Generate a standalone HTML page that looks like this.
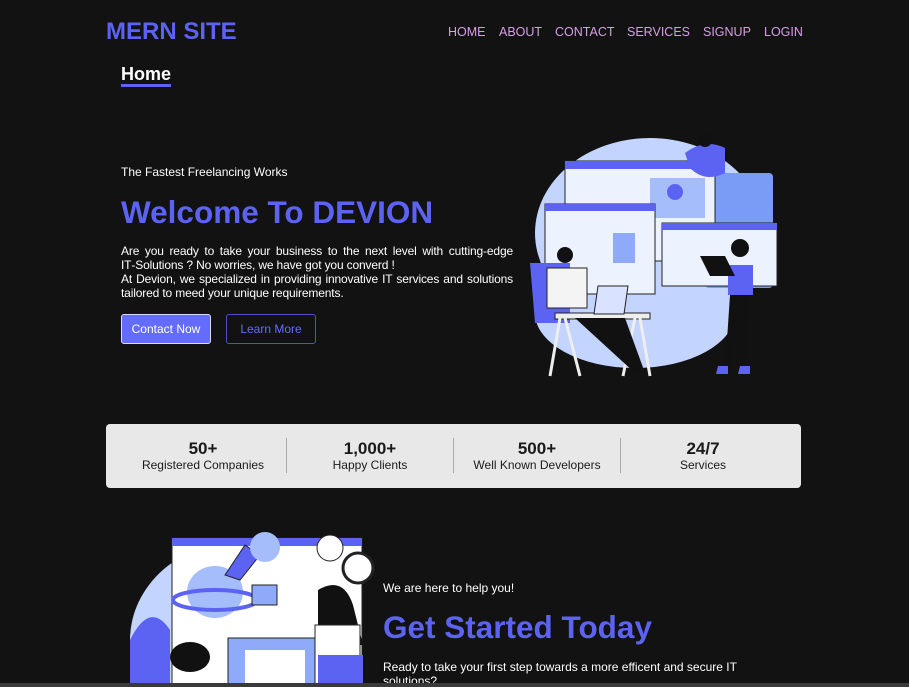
<!DOCTYPE html>
<html><head><style>
*{margin:0;padding:0;box-sizing:border-box}
html,body{width:909px;height:687px;overflow:hidden}
body{background:#121212;font-family:"Liberation Sans",sans-serif;color:#fff;position:relative}
.a{position:absolute}
.logo{left:106px;top:18px;font-size:24px;font-weight:bold;color:#5c63f2}
.nav{top:25px;font-size:12.5px;color:#d79ee8}
.home{left:121px;top:65px;font-size:18px;font-weight:bold;border-bottom:3px solid #5c63f2;line-height:19px}
.p{font-size:12px;line-height:14px}
h1{position:absolute;left:121px;top:194px;font-size:31.5px;color:#5c63f2;font-weight:bold}
.btn{top:314px;height:30px;width:90px;border-radius:3px;font-size:12px;text-align:center;line-height:28px}
.stats{left:106px;top:424px;width:695px;height:64px;background:#e8e8e8;border-radius:4px;color:#1a1a1a}
.st{position:absolute;top:15px;width:166px;text-align:center}
.st b{display:block;font-size:17px;line-height:20px}
.st span{display:block;font-size:12px;line-height:13px}
.div{position:absolute;top:14px;width:1px;height:35px;background:#aaa}
</style></head><body>
<div class="a logo">MERN SITE</div>
<div class="a nav" style="left:448px">HOME</div>
<div class="a nav" style="left:499px">ABOUT</div>
<div class="a nav" style="left:555px">CONTACT</div>
<div class="a nav" style="left:627px">SERVICES</div>
<div class="a nav" style="left:703px">SIGNUP</div>
<div class="a nav" style="left:764px">LOGIN</div>
<div class="a home">Home</div>
<div class="a p" style="left:121px;top:165px">The Fastest Freelancing Works</div>
<h1>Welcome To DEVION</h1>
<div class="a p" style="left:121px;top:244px;width:392px;text-align:justify;letter-spacing:-0.15px">Are you ready to take your business to the next level with cutting-edge IT&#8209;Solutions ? No worries, we have got you converd !<br>At Devion, we specialized in providing innovative IT services and solutions tailored to meed your unique requirements.</div>
<div class="a btn" style="left:121px;background:#646cff;border:1px solid #dcdcff">Contact Now</div>
<div class="a btn" style="left:226px;border:1px solid #4b52c8;color:#646cff">Learn More</div>

<svg class="a" style="left:525px;top:128px" width="260" height="252" viewBox="0 0 260 252">
<ellipse cx="125" cy="105" rx="115" ry="95" fill="#c3d4fe"/>
<ellipse cx="110" cy="185" rx="100" ry="55" fill="#c3d4fe"/>
<rect x="180" y="45" width="68" height="115" rx="4" fill="#7a9cf6"/>
<rect x="40" y="33" width="150" height="100" fill="#edf2ff" stroke="#222"/>
<rect x="40" y="33" width="150" height="8" fill="#5c63f2"/>
<rect x="125" y="50" width="55" height="40" fill="#a5bdfb"/>
<circle cx="150" cy="64" r="8" fill="#5c63f2"/>
<rect x="20" y="76" width="110" height="90" fill="#edf2ff" stroke="#222"/>
<rect x="20" y="76" width="110" height="7" fill="#5c63f2"/>
<rect x="88" y="105" width="22" height="30" fill="#8faaf8"/>
<rect x="137" y="95" width="115" height="63" fill="#edf2ff" stroke="#222"/>
<rect x="137" y="95" width="115" height="7" fill="#5c63f2"/>
<path d="M5 135 h40 v60 h-35z" fill="#5c63f2"/>
<rect x="30" y="185" width="95" height="6" fill="#eee" stroke="#222"/>
<path d="M35 190 l-10 58 M115 190 l10 58 M40 190 l15 58 M110 190 l-12 58" stroke="#eee" stroke-width="3"/>
<path d="M22 140 h40 v40 h-40z" fill="#f4f4f4" stroke="#222"/>
<circle cx="40" cy="127" r="8" fill="#111"/>
<path d="M50 190 l50 0 l20 55 h-10z" fill="#111"/>
<path d="M73 158 h30 l-4 28 h-30z" fill="#d9e3ff" stroke="#222"/>
<path d="M203 137 h25 v30 h-25z" fill="#5c63f2"/>
<path d="M205 167 h20 l-5 75 h-8 l-3 -40 l-3 40 h-6z" fill="#111"/>
<circle cx="215" cy="120" r="9" fill="#111"/>
<path d="M175 128 h25 l10 20 h-25z" fill="#111"/>
<path d="M160 25 q20 -15 40 -5 l0 25 q-20 10 -35 -5z" fill="#5c63f2"/>
<circle cx="180" cy="12" r="7" fill="#111"/>
<path d="M193 238 h10 v8 h-12z M215 238 h10 v8 h-12z" fill="#5c63f2"/>
</svg>

<div class="a stats">
<div class="st" style="left:14px"><b>50+</b><span>Registered Companies</span></div>
<div class="div" style="left:180px"></div>
<div class="st" style="left:181px"><b>1,000+</b><span>Happy Clients</span></div>
<div class="div" style="left:347px"></div>
<div class="st" style="left:348px"><b>500+</b><span>Well Known Developers</span></div>
<div class="div" style="left:514px"></div>
<div class="st" style="left:514px"><b>24/7</b><span>Services</span></div>
</div>

<svg class="a" style="left:130px;top:530px" width="250" height="157" viewBox="0 0 250 157">
<ellipse cx="115" cy="110" rx="115" ry="100" fill="#c3d4fe"/>
<rect x="42" y="8" width="190" height="150" fill="#fff" stroke="#222"/>
<rect x="42" y="8" width="190" height="8" fill="#5c63f2"/>
<ellipse cx="85" cy="62" rx="28" ry="26" fill="#a5bdfb"/>
<ellipse cx="85" cy="70" rx="42" ry="10" fill="none" stroke="#5c63f2" stroke-width="4"/>
<path d="M95 45 l20 -30 l15 10 l-20 25z" fill="#5c63f2" stroke="#222"/>
<circle cx="135" cy="17" r="15" fill="#a5bdfb"/>
<circle cx="200" cy="18" r="13" fill="#fff" stroke="#222"/>
<circle cx="228" cy="38" r="15" fill="#fff" stroke="#222" stroke-width="3"/>
<rect x="122" y="55" width="25" height="20" fill="#8faaf8" stroke="#222"/>
<rect x="98" y="108" width="90" height="49" fill="#8faaf8" stroke="#222"/>
<rect x="115" y="120" width="60" height="37" fill="#fff"/>
<path d="M0 110 q20 -40 40 -10 v57 h-40z" fill="#5c63f2"/>
<ellipse cx="60" cy="127" rx="20" ry="15" fill="#111"/>
<path d="M188 60 q25 -15 35 15 l10 40 h-45z" fill="#111"/>
<path d="M185 95 h45 v62 h-45z" fill="#fff" stroke="#222"/>
<path d="M188 125 h45 v32 h-45z" fill="#5c63f2"/>
</svg>

<div class="a p" style="left:383px;top:581px">We are here to help you!</div>
<div class="a" style="left:383px;top:609px;font-size:31.5px;font-weight:bold;color:#5c63f2">Get Started Today</div>
<div class="a p" style="left:383px;top:660px;width:400px;height:23px;overflow:hidden">Ready to take your first step towards a more efficent and secure IT solutions?</div>
<div class="a" style="left:0;top:683px;width:909px;height:4px;background:#3a3a3a"></div>
</body></html>
